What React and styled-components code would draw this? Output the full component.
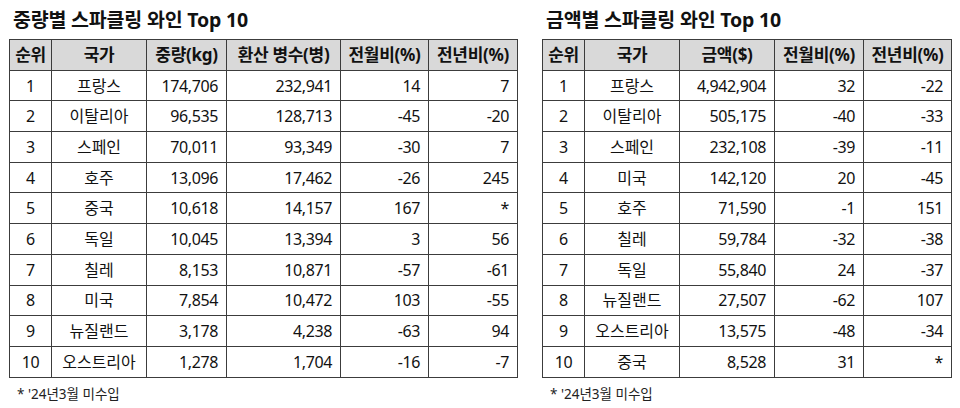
import React from 'react';
import styled, { createGlobalStyle } from 'styled-components';

const GlobalStyle = createGlobalStyle`
  html, body {
    margin: 0;
    padding: 0;
    background: #fff;
  }
  body {
    font-family: 'Noto Sans', 'Noto Sans CJK KR', sans-serif;
    color: #111;
  }
`;

const Page = styled.div`
  width: 960px;
  height: 408px;
  display: flex;
  gap: 25px;
  padding: 9px 0 0 9px;
  box-sizing: border-box;
`;

const Panel = styled.section`
  display: flex;
  flex-direction: column;
  width: ${p => p.width}px;
`;

const Title = styled.h2`
  margin: 0 0 0 4px;
  height: 30px;
  font-size: 19.5px;
  font-weight: 700;
  line-height: 22px;
  letter-spacing: -0.2px;
`;

const Table = styled.table`
  border-collapse: collapse;
  table-layout: fixed;
  width: 100%;
  font-size: 16px;
`;

const Row = styled.tr`
  height: 30.7px;
`;

const Head = styled.th`
  background: #d9d9d9;
  border: 1px solid #3c3c3c;
  font-size: 17px;
  font-weight: 700;
  text-align: center;
  padding: 0;
  line-height: 1;
  letter-spacing: -0.3px;
`;

const Cell = styled.td`
  border: 1px solid #3c3c3c;
  text-align: ${p => (p.center ? 'center' : 'right')};
  letter-spacing: ${p => (p.korean ? 0 : -0.4)}px;
  padding: 0 ${p => (p.center ? 0 : 8)}px 0 0;
  line-height: 1;
  white-space: nowrap;
`;

const Note = styled.p`
  margin: 10px 0 0 8px;
  font-size: 13.5px;
  line-height: 1;
  color: #222;
`;

const weight = [
  [1, '프랑스', '174,706', '232,941', '14', '7'],
  [2, '이탈리아', '96,535', '128,713', '-45', '-20'],
  [3, '스페인', '70,011', '93,349', '-30', '7'],
  [4, '호주', '13,096', '17,462', '-26', '245'],
  [5, '중국', '10,618', '14,157', '167', '*'],
  [6, '독일', '10,045', '13,394', '3', '56'],
  [7, '칠레', '8,153', '10,871', '-57', '-61'],
  [8, '미국', '7,854', '10,472', '103', '-55'],
  [9, '뉴질랜드', '3,178', '4,238', '-63', '94'],
  [10, '오스트리아', '1,278', '1,704', '-16', '-7'],
];

const amount = [
  [1, '프랑스', '4,942,904', '32', '-22'],
  [2, '이탈리아', '505,175', '-40', '-33'],
  [3, '스페인', '232,108', '-39', '-11'],
  [4, '미국', '142,120', '20', '-45'],
  [5, '호주', '71,590', '-1', '151'],
  [6, '칠레', '59,784', '-32', '-38'],
  [7, '독일', '55,840', '24', '-37'],
  [8, '뉴질랜드', '27,507', '-62', '107'],
  [9, '오스트리아', '13,575', '-48', '-34'],
  [10, '중국', '8,528', '31', '*'],
];

function RankTable({ title, width, cols, heads, rows }) {
  return (
    <Panel width={width}>
      <Title>{title}</Title>
      <Table>
        <colgroup>
          {cols.map((w, i) => <col key={i} style={{ width: w }} />)}
        </colgroup>
        <thead>
          <Row>
            {heads.map(h => <Head key={h}>{h}</Head>)}
          </Row>
        </thead>
        <tbody>
          {rows.map(r => (
            <Row key={r[0]}>
              {r.map((v, i) => (
                <Cell key={i} center={i < 2} korean={i === 1}>{v}</Cell>
              ))}
            </Row>
          ))}
        </tbody>
      </Table>
      <Note>* '24년3월 미수입</Note>
    </Panel>
  );
}

export default function App() {
  return (
    <>
      <GlobalStyle />
      <Page>
        <RankTable
          title="중량별 스파클링 와인 Top 10"
          width={508}
          cols={[42, 95, 80, 114, 88, 89]}
          heads={['순위', '국가', '중량(kg)', '환산 병수(병)', '전월비(%)', '전년비(%)']}
          rows={weight}
        />
        <RankTable
          title="금액별 스파클링 와인 Top 10"
          width={409}
          cols={[42, 95, 95, 89, 88]}
          heads={['순위', '국가', '금액($)', '전월비(%)', '전년비(%)']}
          rows={amount}
        />
      </Page>
    </>
  );
}
